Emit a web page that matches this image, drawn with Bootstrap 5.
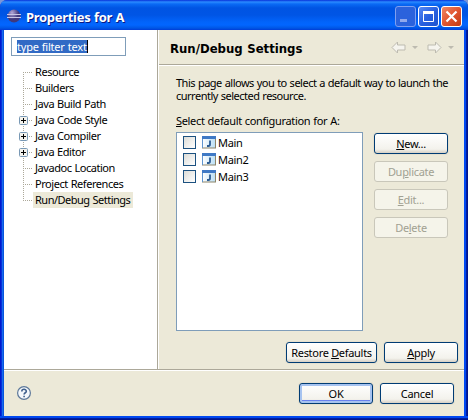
<!DOCTYPE html>
<html lang="en">
<head>
<meta charset="utf-8">
<title>Properties for A</title>
<link href="https://cdn.jsdelivr.net/npm/bootstrap@5.3.0/dist/css/bootstrap.min.css" rel="stylesheet">
<style>
body{width:468px;height:420px;font:11px/13px "Noto Sans","Liberation Sans",sans-serif;color:#000;background:#7b96d8;letter-spacing:-.5px;word-spacing:.5px}
svg{display:block;flex:none}
.win{width:468px;height:420px;padding:0 4px 4px;border-radius:7px 7px 0 0;background:linear-gradient(transparent 416px,#0048f1 416px 418px,#001ea0 418px 419px,#00138c 419px),linear-gradient(90deg,#0019cf 0 1px,#0831d9 1px 2px,#166aee 2px 3px,#0855dd 3px 4px,#0855dd 4px 464px,#0048f1 464px 466px,#001ea0 466px 467px,#00138c 467px)}
.titlebar{height:30px;margin:0 -4px;padding:3px 6px 0 7px;border-radius:7px 7px 0 0;background:linear-gradient(#0831d9 0,#2a8bff 2px,#0a6af5 4px,#0054e3 8px,#0055e5 15px,#0264fb 22px,#0266ff 25px,#0057e6 28px,#003dd7 30px)}
.app-icon{margin-top:6px}
.caption{font:bold 13px/16px "Noto Sans",sans-serif;color:#fff;text-shadow:1px 1px 0 #0a1883;margin:6px 0 0 5px;letter-spacing:-.3px}
.face{background:#ece9d8}
.side{width:154px;flex:none;border-right:1px solid #aca899;padding:7px 0 0 7px}
.filter{width:115px;height:19px;border:1px solid #7f9db9;padding:2px 0 0 5px}
.filter span{display:block;width:71px;height:13px;line-height:13px;background:#316ac5;color:#fff;border-right:1px solid #000;white-space:nowrap;letter-spacing:-.22px}
.tree{margin:8px 0 0 8px;position:relative;letter-spacing:-.45px}
.tree-row{height:16px;line-height:16px}
.trunk{position:absolute;left:4px;top:8px;width:1px;height:129px;background:repeating-linear-gradient(#aca899 0 1px,transparent 1px 2px)}
.twig{width:14px;height:16px;position:relative;flex:none}
.twig::before{content:"";position:absolute;left:4px;top:8px;width:10px;height:1px;background:repeating-linear-gradient(90deg,#aca899 0 1px,transparent 1px 2px)}
.twig svg{position:relative;top:4px}
.lbl{padding:0 3px 0 2px;white-space:nowrap}
.chosen{background:#ece9d8;width:100px;letter-spacing:-.5px}
.main{border-left:1px solid #fff;min-width:0}
.head{height:35px;border-bottom:1px solid #aca899;padding:1px 10px 0 11px}
.head h1{font:bold 13px/16px "DejaVu Sans Condensed","DejaVu Sans",sans-serif;margin:2px 0 0;letter-spacing:0}
.content{border-top:1px solid #fff;height:304px;padding:10px 5px 0 17px}
.intro{white-space:nowrap}
.pick{margin:12px 0 5px;letter-spacing:-.33px}
.cfg{width:187px;height:199px;border:1px solid #7f9db9;background:#fff;padding:1px 0 0 6px}
.cfg-row{height:17px}
.tick{width:13px;height:13px;border:1px solid #1c5180;background:linear-gradient(135deg,#dcdcd7,#fff);margin-right:6px}
.cfg .lbl{letter-spacing:-.35px}
.xp{width:74px;height:21px;border:1px solid #003c74;border-radius:3px;background:linear-gradient(#fff,#f3f2ec 80%,#d6d0c5);padding:0;font:11px/19px "Noto Sans",sans-serif;letter-spacing:-.3px;color:#000;text-align:center;box-shadow:0 0 0 1px #e5e0cf;flex:none;white-space:nowrap}
.xp:disabled{border-color:#c9c7ba;background:#f5f4ea;color:#a1a192;box-shadow:none}
.wide{width:91px}
.xp.primary{box-shadow:inset 0 0 0 2px #a6c3f0,inset 0 -2px 0 1px #6982ee,0 0 0 1px #e5e0cf}
.side-buttons{gap:7px;margin:1px 0 0 11px}
.page-buttons{gap:7px;margin-top:11px;padding-right:1px}
.foot{border-top:1px solid #aca899;height:47px;box-shadow:inset 0 1px #fff;padding:13px 10px 0 13px}
</style>
</head>
<body>
<div class="win">
  <div class="titlebar d-flex align-items-start">
    <svg class="app-icon" width="14" height="14" viewBox="0 0 14 14"><defs><radialGradient id="e" cx=".35" cy=".25"><stop offset="0" stop-color="#b3a8d8"/><stop offset="1" stop-color="#40387c"/></radialGradient></defs><circle cx="7" cy="7" r="6.500" fill="url(#e)"/><path d="M0 5.500h14M0 8.500h14" stroke="#c9c6e6"/></svg>
    <div class="caption">Properties for A</div>
    <svg class="ms-auto" style="margin-top:3px" width="67" height="21" viewBox="0 0 67 21"><defs><linearGradient id="b" x2="1" y2="1"><stop offset="0" stop-color="#5a8cf5"/><stop offset=".5" stop-color="#2860e0"/><stop offset="1" stop-color="#1b52ce"/></linearGradient><linearGradient id="r" x2="1" y2="1"><stop offset="0" stop-color="#f08a68"/><stop offset=".5" stop-color="#e15530"/><stop offset="1" stop-color="#c03a12"/></linearGradient></defs><rect x=".5" y=".5" width="20" height="20" rx="2.5" fill="#2b62dc" stroke="#7f9ff0"/><path d="M5 14.5h7" stroke="#91a9ec" stroke-width="3"/><rect x="23.500" y=".5" width="20" height="20" rx="2.500" fill="url(#b)" stroke="#fff"/><path d="M28.500 6v9.500h10V6" fill="none" stroke="#fff"/><path d="M28 6.500h11" stroke="#fff" stroke-width="3"/><rect x="46.500" y=".5" width="20" height="20" rx="2.500" fill="url(#r)" stroke="#fff"/><path d="M51.500 5.500l10 10m0-10l-10 10" stroke="#fff" stroke-width="2.200"/></svg>
  </div>
  <div class="face">
    <div class="d-flex">
      <div class="side bg-white">
        <div class="filter"><span>type filter text</span></div>
        <div class="tree">
          <div class="trunk"></div>
          <div class="tree-row d-flex"><i class="twig"></i><span class="lbl">Resource</span></div>
          <div class="tree-row d-flex"><i class="twig"></i><span class="lbl">Builders</span></div>
          <div class="tree-row d-flex"><i class="twig"></i><span class="lbl">Java Build Path</span></div>
          <div class="tree-row d-flex"><i class="twig"><svg width="9" height="9"><rect x=".5" y=".5" width="8" height="8" rx="1" fill="#f4f3ee" stroke="#7898b5"/><path d="M2 4.500h5M4.500 2v5" stroke="#000"/></svg></i><span class="lbl">Java Code Style</span></div>
          <div class="tree-row d-flex"><i class="twig"><svg width="9" height="9"><rect x=".5" y=".5" width="8" height="8" rx="1" fill="#f4f3ee" stroke="#7898b5"/><path d="M2 4.500h5M4.500 2v5" stroke="#000"/></svg></i><span class="lbl">Java Compiler</span></div>
          <div class="tree-row d-flex"><i class="twig"><svg width="9" height="9"><rect x=".5" y=".5" width="8" height="8" rx="1" fill="#f4f3ee" stroke="#7898b5"/><path d="M2 4.500h5M4.500 2v5" stroke="#000"/></svg></i><span class="lbl">Java Editor</span></div>
          <div class="tree-row d-flex"><i class="twig"></i><span class="lbl">Javadoc Location</span></div>
          <div class="tree-row d-flex"><i class="twig"></i><span class="lbl">Project References</span></div>
          <div class="tree-row d-flex"><i class="twig"></i><span class="lbl chosen">Run/Debug Settings</span></div>
        </div>
      </div>
      <div class="main flex-grow-1">
        <div class="head d-flex align-items-center justify-content-between">
          <h1>Run/Debug Settings</h1>
          <svg width="63" height="13" viewBox="0 0 63 13"><g fill="#f5f4ee" stroke="#bdbbb0"><path d="M1 6.500L6.500 1v3H14v5H6.500v3z"/><path d="M50 6.500L44.500 1v3H37v5h7.500v3z"/></g><path d="M21 5h6l-3 3zM57 5h6l-3 3z" fill="#bdbbb0"/></svg>
        </div>
        <div class="content">
          <div class="intro">This page allows you to select a default way to launch the<br>currently selected resource.</div>
          <div class="pick"><u>S</u>elect default configuration for A:</div>
          <div class="d-flex">
            <div class="cfg">
              <div class="cfg-row d-flex align-items-center"><i class="tick"></i><svg width="14" height="13"><use href="#j"/></svg><span class="lbl">Main</span></div>
              <div class="cfg-row d-flex align-items-center"><i class="tick"></i><svg width="14" height="13"><use href="#j"/></svg><span class="lbl">Main2</span></div>
              <div class="cfg-row d-flex align-items-center"><i class="tick"></i><svg width="14" height="13"><use href="#j"/></svg><span class="lbl">Main3</span></div>
            </div>
            <div class="side-buttons d-flex flex-column">
              <button class="xp"><u>N</u>ew...</button>
              <button class="xp" disabled>Du<u>p</u>licate</button>
              <button class="xp" disabled><u>E</u>dit...</button>
              <button class="xp" disabled>De<u>l</u>ete</button>
            </div>
          </div>
          <div class="page-buttons d-flex justify-content-end">
            <button class="xp wide">Restore <u>D</u>efaults</button>
            <button class="xp"><u>A</u>pply</button>
          </div>
        </div>
      </div>
    </div>
    <div class="foot d-flex">
      <svg width="14" height="14" style="margin-top:3px" viewBox="0 0 14 14"><circle cx="7" cy="7" r="6.400" fill="#f4f8fb" stroke="#5d7899" stroke-width="1.200"/><path d="M4.800 5.500C4.800 2.600 9.300 2.700 9.300 5.200 9.300 6.800 7.100 6.700 7.100 8.600M7.100 9.800v1.500" fill="none" stroke="#3f5f8c" stroke-width="1.600"/></svg>
      <button class="xp primary ms-auto">OK</button>
      <button class="xp" style="margin-left:7px">Cancel</button>
    </div>
  </div>
</div>
<svg width="0" height="0" class="position-absolute"><defs><linearGradient id="p" x2="1"><stop offset="0" stop-color="#fff"/><stop offset="1" stop-color="#b9def5"/></linearGradient><g id="j"><rect x=".5" y=".5" width="13" height="11.500" fill="url(#p)" stroke="#8c8468"/><path d="M0 1.500h14" stroke="#3f79c5" stroke-width="3"/><path d="M.5 3v9" stroke="#5e94cf"/><path d="M8 4.500v3.800q0 1.700-1.500 1.700H5" fill="none" stroke="#2c5c93" stroke-width="1.800"/></g></defs></svg>
<script src="https://cdn.jsdelivr.net/npm/bootstrap@5.3.0/dist/js/bootstrap.bundle.min.js"></script>
</body>
</html>
